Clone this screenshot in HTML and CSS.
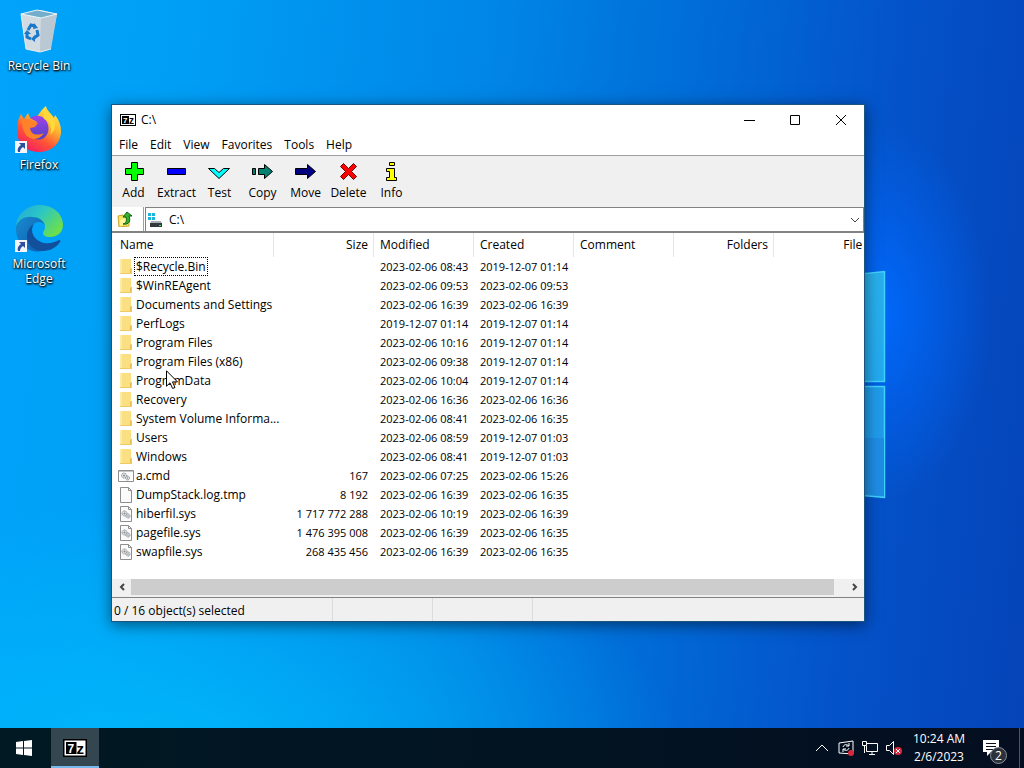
FILE: index.html
```html
<!DOCTYPE html>
<html lang="en">
<head>
  <meta charset="UTF-8" />
  <meta name="viewport" content="width=device-width, initial-scale=1.0"/>
  <title>C:\</title>
  <link rel="stylesheet" href="styles.css">
</head>
<body>
  <!-- shared icons -->
  <svg class="sprite" aria-hidden="true">
    <symbol id="folder" viewBox="0 0 16 16">
      <path d="M2 0h11v10h1v5H2z" fill="#fbdf83"/>
      <path d="M2 0h2v15H2z" fill="#fdeaa6"/>
      <path d="M12 10l2-1v6h-2z" fill="#e8bd50"/>
      <path d="M2 14.500h11M13.500 9v6" stroke="#efcb68" fill="none"/>
    </symbol>
    <symbol id="file" viewBox="0 0 16 16">
      <path d="M2.500.5h8l3 3v12h-11z" fill="#fbfbfb" stroke="#8e8e8e"/>
      <path d="M10.500.5v3h3" fill="none" stroke="#8e8e8e"/>
    </symbol>
    <symbol id="gears" viewBox="0 0 10 9">
      <circle cx="3.500" cy="3.500" r="2.500" fill="#e2e6e8" stroke="#84898c" stroke-dasharray="1.300 .5"/>
      <circle cx="3.500" cy="3.500" r="1" fill="#84898c"/>
      <circle cx="7" cy="6" r="2" fill="#e2e6e8" stroke="#84898c" stroke-dasharray="1.200 .4"/>
      <circle cx="7" cy="6" r=".7" fill="#84898c"/>
    </symbol>
    <symbol id="sys" viewBox="0 0 16 16">
      <use href="#file"/>
      <use href="#gears" x="3" y="4" width="10" height="9"/>
    </symbol>
    <symbol id="cmd" viewBox="0 0 16 16">
      <path d="M.5 2.500h15v11H.5z" fill="#fff" stroke="#8e8e8e"/>
      <path d="M1 3h14v1H1z" fill="#c3c7ca"/>
      <use href="#gears" x="2" y="4" width="11" height="9"/>
    </symbol>
    <symbol id="shortcut" viewBox="0 0 12 12">
      <path d="M0 0h12v12H0z" fill="#f4f6fa"/>
      <path d="M4 2h6v6L8 6C6 7 5 9 5 11H3C2 8 3 6 6 4z" fill="#2c4f9e"/>
    </symbol>
  </svg>

  <main class="desktop">
    <svg class="pane-light" viewBox="0 0 180 230" aria-hidden="true">
      <defs>
        <linearGradient id="pane" x1="0" y1="0" x2="1" y2="1">
          <stop offset="0" stop-color="#30b5e8"/>
          <stop offset="1" stop-color="#22a9ef"/>
        </linearGradient>
      </defs>
      <path d="M0 20L178.500 1.500v110H0z" fill="url(#pane)" stroke="#3fd3fb" stroke-width="1.500"/>
      <path d="M0 116.500h178.500v111L0 212z" fill="#209bea" stroke="#3fd3fb" stroke-width="1.500"/>
      <path d="M0 168h178v58L0 211z" fill="#1f8ce4"/>
    </svg>

    <div class="shortcuts">
      <a class="shortcut" href="#">
        <svg viewBox="0 0 48 48" aria-hidden="true">
          <path d="M6 8l5 35 15 3 9-3 7-35-16-4z" fill="#c4d3dc"/>
          <path d="M6 8l20 4-1 34-14-3z" fill="#d2dbe1"/>
          <path d="M26 12l16-4-6 35-11 3z" fill="#b9c8d2"/>
          <path d="M6 8l16-4 20 4-16 4z" fill="#73afcc" stroke="#e9f5fa"/>
          <path d="M6 8l5 35 14 3 11-3" fill="none" stroke="#e4ebef"/>
          <g fill="none" stroke="#1978c8" stroke-width="3">
            <path d="M13 24l3-5 4 1"/>
            <path d="M22 24l1 5-4 3"/>
            <path d="M16 33l-4-2v-4"/>
          </g>
          <path d="M19 17l4 5-5 1zM20 29v7l-4-3zM9 28l3-4 4 4z" fill="#1978c8"/>
        </svg>
        <span>Recycle Bin</span>
      </a>
      <a class="shortcut" href="#">
        <svg viewBox="0 0 48 48" aria-hidden="true">
          <defs>
            <linearGradient id="fire" x1=".8" y1="0" x2=".2" y2="1">
              <stop offset="0" stop-color="#fff14d"/>
              <stop offset=".35" stop-color="#ffb52d"/>
              <stop offset=".65" stop-color="#ff5536"/>
              <stop offset="1" stop-color="#f3156a"/>
            </linearGradient>
            <linearGradient id="globe" x1="0" y1="0" x2="0" y2="1">
              <stop offset="0" stop-color="#a143e6"/>
              <stop offset="1" stop-color="#4e42c5"/>
            </linearGradient>
          </defs>
          <path d="M6 9l3 5 4-6 2 5c4 0 5-1 7-1 2-3 4-7 9-11 1 6 5 7 8 12l1-3c4 5 6 10 6 16 0 12-9 21-22 21S2 38 2 26c0-7 1-12 4-17z" fill="url(#fire)"/>
          <path d="M15 13c5-3 11-3 15 1 4 5 5 12 1 17-5 6-14 4-17-2l-2-8 7-1 3-3z" fill="url(#globe)"/>
          <path d="M7 15c4-1 8-1 11 1l5 2-3 4-5 1c1 7 7 8 14 5-4 7-13 8-18 2-3-4-4-9-4-15z" fill="#ff8128"/>
          <path d="M29 14c6 2 9 9 6 16 5-4 7-11 3-18l-7-9c-3 4-3 7-2 11z" fill="#ffd83c"/>
          <use href="#shortcut" y="36" width="12" height="12"/>
        </svg>
        <span>Firefox</span>
      </a>
      <a class="shortcut" href="#">
        <svg viewBox="0 0 48 48" aria-hidden="true">
          <defs>
            <linearGradient id="wave" x1="0" y1="0" x2="1" y2=".6">
              <stop offset="0" stop-color="#23a6da"/>
              <stop offset=".5" stop-color="#2bc7c5"/>
              <stop offset="1" stop-color="#6bdf4c"/>
            </linearGradient>
            <linearGradient id="deep" x1="0" y1="0" x2="1" y2="1">
              <stop offset="0" stop-color="#168bd0"/>
              <stop offset="1" stop-color="#1259ad"/>
            </linearGradient>
          </defs>
          <path d="M1 22C2 9 13 1 25 1c13 0 23 9 23 20 0 8-6 12-13 12-5 0-7-2-7-4 0-2 2-3 2-6 0-6-7-10-15-10C8 13 3 17 1 22z" fill="url(#wave)"/>
          <path d="M1 23c2-7 9-11 16-10 8 0 13 5 13 10 0-3-3-5-6-5-6 0-9 5-9 11 0 9 6 16 13 18C13 50 0 39 1 23z" fill="url(#deep)"/>
          <path d="M19 20c-5 7 0 17 10 19 6 1 11-1 15-3 1 0 2 1 1 2-8 12-25 11-31 2-4-7-2-16 5-20z" fill="#124f9c"/>
          <use href="#shortcut" y="36" width="12" height="12"/>
        </svg>
        <span>Microsoft Edge</span>
      </a>
    </div>

    <section class="window">
      <header class="titlebar">
        <svg class="title-icon" viewBox="0 0 16 12" aria-hidden="true">
          <rect width="16" height="12"/>
          <rect x="1" y="1" width="14" height="10" fill="#fff"/>
          <rect x="2" y="2" width="7" height="8"/>
          <text class="logo-seven" x="3" y="9">7</text>
          <text class="logo-z" x="9" y="10">z</text>
        </svg>
        <h1>C:\</h1>
        <div class="window-controls">
          <button aria-label="Minimize"><svg viewBox="0 0 12 12"><path d="M1 6.500h11"/></svg></button>
          <button aria-label="Maximize"><svg viewBox="0 0 12 12"><path d="M1.500 1.500h9v9h-9z"/></svg></button>
          <button aria-label="Close"><svg viewBox="0 0 12 12"><path d="M1 1l10 10M11 1L1 11"/></svg></button>
        </div>
      </header>

      <nav class="menu">
        <button>File</button>
        <button>Edit</button>
        <button>View</button>
        <button>Favorites</button>
        <button>Tools</button>
        <button>Help</button>
      </nav>

      <div class="toolbar">
        <button>
          <svg viewBox="0 0 24 20"><path d="M9.500.5h6v6h6v6h-6v6h-6v-6h-6v-6h6z" fill="#0f0"/></svg>
          Add
        </button>
        <button>
          <svg viewBox="0 0 24 20"><path d="M2.500 6.500h18v6h-18z" fill="#00f"/></svg>
          Extract
        </button>
        <button>
          <svg viewBox="0 0 24 20"><path d="M.5 6.500h6l4.500 4 4.500-4h6L11 16.500z" fill="#0ff"/></svg>
          Test
        </button>
        <button>
          <svg viewBox="0 0 24 20"><path d="M1.500 6.500h3v6h-3zM7.500 6.500h6v-4l8 7-8 7v-4h-6z" fill="#008070"/></svg>
          Copy
        </button>
        <button>
          <svg viewBox="0 0 24 20"><path d="M1.500 6.500h12v-4l8 7-8 7v-4h-12z" fill="#000080"/></svg>
          Move
        </button>
        <button>
          <svg viewBox="0 0 24 20"><path d="M3.500 4.500l3-3 5 5 5-5 3 3-5 5 5 5-3 3-5-5-5 5-3-3 5-5z" fill="#f00" stroke="#700"/></svg>
          Delete
        </button>
        <button>
          <svg viewBox="0 0 24 20"><path d="M9.500.5h5v3h-5zM6.500 6.500h8v9h2v3h-10v-3h3v-6h-3z" fill="#ff0"/></svg>
          Info
        </button>
      </div>

      <div class="address">
        <button class="up" aria-label="Up One Level">
          <svg viewBox="0 0 16 16">
            <path d="M1 5l5-1 1 2h5v9l-10 1z" fill="#f5e45e" stroke="#c6a72b"/>
            <path d="M3 15V9l5-2v6z" fill="#fff49a"/>
            <path d="M6 13c4-1 4-4 3-7H6l4-5 5 4h-3c2 5 0 9-6 8z" fill="#31b52c" stroke="#145f18"/>
          </svg>
        </button>
        <label class="path">
          <svg class="drive" viewBox="0 0 16 16">
            <path d="M0 1h3v3H0zM4 1h3v3H4zM0 5h3v3H0zM4 5h3v3H4z" fill="#19b6d9"/>
            <path d="M3 9h10l1 3H2z" fill="#a9b0b5"/>
            <path d="M2 11h12v4H2z" fill="#33383d"/>
            <path d="M11 13h2v1h-2z" fill="#42df6a"/>
          </svg>
          <select aria-label="Address">
            <option>C:\</option>
          </select>
          <svg class="arrow" viewBox="0 0 10 6"><path d="M1 1l4 4 4-4"/></svg>
        </label>
      </div>

      <div class="list">
        <table>
          <colgroup>
            <col class="col-name">
            <col span="6" class="col">
          </colgroup>
          <thead>
            <tr>
              <th>Name</th>
              <th class="num">Size</th>
              <th>Modified</th>
              <th>Created</th>
              <th>Comment</th>
              <th class="num">Folders</th>
              <th class="num">Files</th>
            </tr>
          </thead>
          <tbody id="files"></tbody>
        </table>
      </div>

      <div class="scrollbar">
        <button aria-label="Scroll left"><svg viewBox="0 0 8 8"><path d="M6 1L3 4l3 3"/></svg></button>
        <div class="track"><div class="thumb"></div></div>
        <button aria-label="Scroll right"><svg viewBox="0 0 8 8"><path d="M2 1l3 3-3 3"/></svg></button>
      </div>

      <footer class="status">
        <span>0 / 16 object(s) selected</span>
        <span></span>
        <span></span>
        <span></span>
      </footer>
    </section>

    <svg class="cursor" viewBox="0 0 12 19" aria-hidden="true">
      <path d="M.5.8v15.400l3.500-3.400 2.600 5.700 2.400-1-2.500-5.600h5z" fill="#fff" stroke="#000"/>
    </svg>
  </main>

  <footer class="taskbar">
    <button class="start" aria-label="Start">
      <svg viewBox="0 0 16 16"><path d="M0 2l7-1v6.500H0zM8 1l8-1v7.500H8zM0 8.500h7V15l-7-1zM8 8.500h8V16l-8-1z"/></svg>
    </button>
    <button class="task" aria-label="7-Zip">
      <svg viewBox="0 0 16 12">
        <rect width="16" height="12"/>
        <rect x="1" y="1" width="14" height="10" fill="#fff"/>
        <rect x="2" y="2" width="7" height="8"/>
        <text class="logo-seven" x="3" y="9">7</text>
        <text class="logo-z" x="9" y="10">z</text>
      </svg>
    </button>
    <div class="tray">
      <button aria-label="Show hidden icons">
        <svg viewBox="0 0 16 16"><path d="M2 11l6-6 6 6"/></svg>
      </button>
      <button aria-label="Updates">
        <svg viewBox="0 0 16 16">
          <path d="M1 3l14-2v13L1 13z"/>
          <path d="M5 7c1-3 4-3 6-1M11 3v3H8M11 8c-1 3-4 3-6 1M5 12V9h3"/>
          <circle cx="13" cy="13" r="3" class="red"/>
        </svg>
      </button>
      <button aria-label="Network">
        <svg viewBox="0 0 16 16"><path d="M5 3.500h10.500v8H4.500V6M10 12v2.500M7 14.500h6M.5 1.500h4v4h-4zM2.500 6v7"/></svg>
      </button>
      <button aria-label="Volume muted">
        <svg viewBox="0 0 16 16">
          <path d="M.5 5.500h3l4-4v13l-4-4h-3z"/>
          <circle cx="12" cy="11" r="4" class="red"/>
          <path d="M10 9l4 4M14 9l-4 4"/>
        </svg>
      </button>
    </div>
    <div class="clock">
      <time>10:24 AM</time>
      <time>2/6/2023</time>
    </div>
    <button class="notes" aria-label="Notifications">
      <svg viewBox="0 0 16 16">
        <path d="M0 0h16v12H8l-4 4v-4H0z" fill="#fff"/>
        <path d="M3 3.500h10M3 6.500h10M3 9.500h7" stroke="#08101c"/>
      </svg>
      <span class="badge">2</span>
    </button>
    <button class="show-desktop" aria-label="Show desktop"></button>
  </footer>

  <script>
    // icon, name, size, modified, created
    const files = [
      ['folder', '$Recycle.Bin', '', '2023-02-06 08:43', '2019-12-07 01:14'],
      ['folder', '$WinREAgent', '', '2023-02-06 09:53', '2023-02-06 09:53'],
      ['folder', 'Documents and Settings', '', '2023-02-06 16:39', '2023-02-06 16:39'],
      ['folder', 'PerfLogs', '', '2019-12-07 01:14', '2019-12-07 01:14'],
      ['folder', 'Program Files', '', '2023-02-06 10:16', '2019-12-07 01:14'],
      ['folder', 'Program Files (x86)', '', '2023-02-06 09:38', '2019-12-07 01:14'],
      ['folder', 'ProgramData', '', '2023-02-06 10:04', '2019-12-07 01:14'],
      ['folder', 'Recovery', '', '2023-02-06 16:36', '2023-02-06 16:36'],
      ['folder', 'System Volume Informa...', '', '2023-02-06 08:41', '2023-02-06 16:35'],
      ['folder', 'Users', '', '2023-02-06 08:59', '2019-12-07 01:03'],
      ['folder', 'Windows', '', '2023-02-06 08:41', '2019-12-07 01:03'],
      ['cmd', 'a.cmd', '167', '2023-02-06 07:25', '2023-02-06 15:26'],
      ['file', 'DumpStack.log.tmp', '8 192', '2023-02-06 16:39', '2023-02-06 16:35'],
      ['sys', 'hiberfil.sys', '1 717 772 288', '2023-02-06 10:19', '2023-02-06 16:39'],
      ['sys', 'pagefile.sys', '1 476 395 008', '2023-02-06 16:39', '2023-02-06 16:35'],
      ['sys', 'swapfile.sys', '268 435 456', '2023-02-06 16:39', '2023-02-06 16:35']
    ];

    document.getElementById('files').innerHTML = files.map((file, i) => `
      <tr>
        <td class="name${i === 0 ? ' focused' : ''}">
          <div><svg viewBox="0 0 16 16"><use href="#${file[0]}"/></svg><span>${file[1]}</span></div>
        </td>
        <td class="num">${file[2]}</td>
        <td>${file[3]}</td>
        <td>${file[4]}</td>
        <td></td><td></td><td></td>
      </tr>`).join('');
  </script>
</body>
</html>
```

FILE: styles.css
```css
* {
  box-sizing: border-box;
}

body {
  margin: 0;
  min-height: 100vh;
  display: flex;
  flex-direction: column;
  overflow: hidden;
  font-family: "Open Sans", "Noto Sans", sans-serif;
  font-size: 12px;
  line-height: 16px;
  color: #000;
}

button, select {
  font: inherit;
  color: inherit;
  background: none;
  border: none;
  border-radius: 0;
  padding: 0;
}

svg {
  display: block;
  flex: none;
}

.sprite {
  display: none;
}

/* 7z logo */
.logo-seven, .logo-z {
  font-family: "Liberation Sans", sans-serif;
  font-size: 8px;
  font-weight: bold;
  fill: #fff;
}

.logo-z {
  font-size: 10px;
  fill: #000;
}

/* desktop */
.desktop {
  flex: 1;
  position: relative;
  overflow: hidden;
  background:
    radial-gradient(ellipse 110px 190px at 86% 43%, rgba(0, 106, 255, 0.9), rgba(0, 106, 255, 0) 100%),
    radial-gradient(ellipse 520px 260px at 16% 105%, rgba(0, 190, 252, 0.8), rgba(0, 190, 252, 0) 100%),
    linear-gradient(96deg, #00a4fa 0%, #00a0f6 15%, #0086e6 45%, #006fd9 62%, #0453ca 82%, #0543b8 100%);
}

.pane-light {
  position: absolute;
  left: 706px;
  top: 270px;
  width: 180px;
}

.shortcuts {
  display: grid;
  grid-auto-rows: 99px;
  width: 78px;
}

.shortcut {
  display: flex;
  flex-direction: column;
  align-items: center;
  padding: 6px 2px 0;
  gap: 4px;
  color: #fff;
  text-align: center;
  text-decoration: none;
  line-height: 15px;
  text-shadow: 1px 1px 2px #000, 0 1px 2px #000;
}

.shortcut svg {
  width: 48px;
  height: 48px;
}

/* window */
.window {
  position: absolute;
  left: 111px;
  top: 104px;
  width: 754px;
  border: 1px solid #1b557f;
  background: #fff;
  box-shadow: 0 3px 14px rgba(0, 0, 0, 0.5);
}

.titlebar {
  display: flex;
  align-items: center;
  height: 29px;
  padding-left: 8px;
  gap: 5px;
}

.title-icon {
  width: 16px;
  height: 12px;
}

.titlebar h1 {
  margin: 0;
  font-size: 12px;
  font-weight: normal;
}

.window-controls {
  display: flex;
  margin-left: auto;
}

.window-controls button {
  width: 46px;
  height: 29px;
  display: grid;
  place-items: center;
}

.window-controls svg {
  width: 12px;
  height: 12px;
  fill: none;
  stroke: #000;
}

.menu {
  display: flex;
  height: 22px;
  padding-left: 1px;
  border-bottom: 1px solid #a0a0a0;
}

.menu button {
  padding: 0 6px;
}

.toolbar {
  display: flex;
  height: 51px;
  background: #f0f0f0;
}

.toolbar button {
  display: flex;
  flex-direction: column;
  align-items: center;
  gap: 3px;
  width: 43px;
  padding-top: 6px;
}

.toolbar svg {
  width: 24px;
  height: 20px;
  stroke: #000;
}

.address {
  display: flex;
  height: 26px;
  border-bottom: 2px solid #828282;
}

.up {
  width: 32px;
  padding-left: 5px;
  border-right: 1px solid #a0a0a0;
}

.up svg {
  width: 16px;
  height: 16px;
}

.path {
  flex: 1;
  display: flex;
  align-items: center;
  gap: 5px;
  margin-left: 1px;
  padding: 0 3px 0 2px;
  border: 1px solid #828282;
  border-bottom: none;
}

.drive {
  width: 16px;
  height: 16px;
}

.path select {
  flex: 1;
  appearance: none;
}

.arrow {
  width: 10px;
  height: 6px;
  fill: none;
  stroke: #444;
}

/* file list */
.list {
  min-height: 346px;
  overflow: hidden;
  margin-right: 2px;
}

table {
  width: 762px;
  table-layout: fixed;
  border-collapse: separate;
  border-spacing: 0;
}

.col-name {
  width: 162px;
}

.col {
  width: 100px;
}

th {
  height: 24px;
  padding: 0 5px 0 6px;
  border-right: 1px solid #e5e5e5;
  font-weight: normal;
  text-align: left;
}

th:first-child {
  padding-left: 8px;
}

td {
  height: 19px;
  padding: 0 6px;
  font-size: 11px;
  white-space: nowrap;
}

.num {
  text-align: right;
}

.name {
  padding: 0;
  font-size: 12px;
}

.name div {
  display: flex;
  align-items: center;
  padding-left: 6px;
}

.name svg {
  width: 16px;
  height: 16px;
}

.name span {
  padding: 0 1px;
  line-height: 17px;
  border: 1px solid transparent;
}

.focused span {
  border: 1px dotted #000;
}

.scrollbar {
  display: flex;
  height: 19px;
  padding-bottom: 2px;
  background: #f0f0f0;
  border-bottom: 1px solid #828282;
}

.scrollbar button {
  width: 19px;
  display: grid;
  place-items: center;
}

.scrollbar svg {
  width: 8px;
  height: 8px;
  fill: none;
  stroke: #444;
  stroke-width: 2;
}

.track {
  flex: 1;
}

.thumb {
  width: 98.4%;
  height: 100%;
  background: #cdcdcd;
}

.status {
  display: grid;
  grid-template-columns: 221px 100px 100px 1fr;
  height: 23px;
  background: #f0f0f0;
}

.status span {
  padding: 5px 2px 0;
  border-right: 1px solid #dcdcdc;
}

.status span:last-child {
  border-right: none;
}

.cursor {
  position: absolute;
  left: 166px;
  top: 370px;
  width: 12px;
  height: 19px;
}

/* taskbar */
.taskbar {
  display: flex;
  height: 40px;
  color: #fff;
  background: linear-gradient(90deg, #011923, #021422 50%, #040e20);
}

.taskbar button {
  display: grid;
  place-items: center;
}

.start {
  width: 48px;
}

.start svg {
  width: 16px;
  height: 16px;
  fill: #fff;
}

.taskbar .task {
  width: 48px;
  margin-left: 3px;
  padding-top: 2px;
  background: #34464f;
  border-bottom: 2px solid #76b9ed;
}

.task svg {
  width: 24px;
  height: 18px;
}

.tray {
  display: flex;
  margin-left: auto;
}

.tray button {
  width: 24px;
}

.tray svg {
  width: 16px;
  height: 16px;
  fill: none;
  stroke: #fff;
  stroke-width: 1;
}

.tray .red {
  fill: #d8283c;
  stroke: none;
}

.clock {
  display: flex;
  flex-direction: column;
  justify-content: center;
  gap: 2px;
  width: 66px;
  text-align: center;
}

.notes {
  position: relative;
  width: 38px;
}

.notes svg {
  width: 16px;
  height: 16px;
}

.badge {
  position: absolute;
  right: 3px;
  bottom: 4px;
  width: 17px;
  height: 17px;
  border: 1px solid #8a9097;
  border-radius: 50%;
  background: #2b323b;
  line-height: 15px;
}

.show-desktop {
  width: 5px;
  margin-left: 9px;
  border-left: 1px solid #4a5563;
}
```
